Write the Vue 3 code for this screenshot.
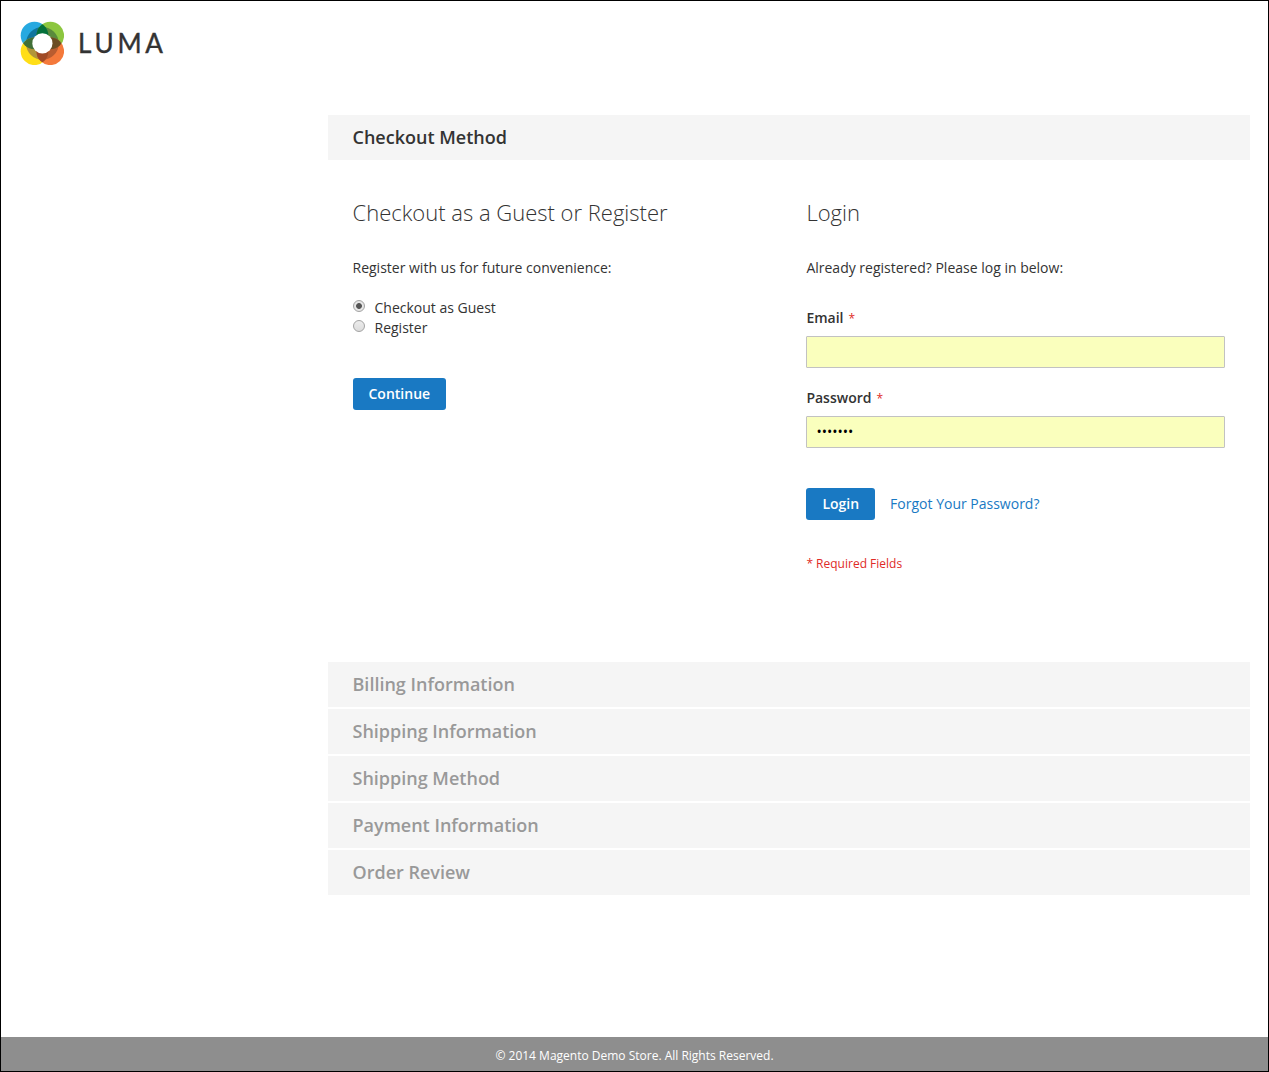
<script setup>
import { ref } from 'vue'

const method = ref('guest')
const email = ref('')
const password = ref('•••••••')
const steps = [
  'Billing Information',
  'Shipping Information',
  'Shipping Method',
  'Payment Information',
  'Order Review',
]
</script>

<template>
  <div class="page">
    <header class="header">
      <svg class="mark" width="44" height="44" viewBox="-22.4 -22.4 44 44" aria-hidden="true">
        <defs>
          <clipPath id="c-blue"><circle cx="-7.9" cy="-7.9" r="13.8" /></clipPath>
          <clipPath id="c-green"><circle cx="7.9" cy="-7.9" r="13.8" /></clipPath>
          <clipPath id="c-yellow"><circle cx="-7.9" cy="7.9" r="13.8" /></clipPath>
          <clipPath id="c-orange"><circle cx="7.9" cy="7.9" r="13.8" /></clipPath>
        </defs>
        <circle cx="-7.9" cy="-7.9" r="13.8" fill="#27a9e0" />
        <circle cx="7.9" cy="-7.9" r="13.8" fill="#8cc63f" />
        <circle cx="-7.9" cy="7.9" r="13.8" fill="#ffde17" />
        <circle cx="7.9" cy="7.9" r="13.8" fill="#f4793b" />
        <g clip-path="url(#c-blue)"><circle r="16.3" fill="#10759d" /></g>
        <g clip-path="url(#c-green)"><circle r="16.3" fill="#5a8a3c" /></g>
        <g clip-path="url(#c-yellow)"><circle r="16.3" fill="#b2953a" /></g>
        <g clip-path="url(#c-orange)"><circle r="16.3" fill="#b85c30" /></g>
        <g clip-path="url(#c-blue)"><circle cx="7.9" cy="-7.9" r="13.8" fill="#04703b" /></g>
        <g clip-path="url(#c-blue)"><circle cx="-7.9" cy="7.9" r="13.8" fill="#416f37" /></g>
        <g clip-path="url(#c-orange)"><circle cx="7.9" cy="-7.9" r="13.8" fill="#6b4c23" /></g>
        <g clip-path="url(#c-orange)"><circle cx="-7.9" cy="7.9" r="13.8" fill="#a04a25" /></g>
        <circle r="10.1" fill="#fff" />
      </svg>
      <span class="wordmark">LUMA</span>
    </header>

    <main class="checkout">
      <h1 class="bar active">Checkout Method</h1>
      <div class="columns">
        <section class="col">
          <h2>Checkout as a Guest or Register</h2>
          <p class="intro">Register with us for future convenience:</p>
          <div class="choices">
            <label><input v-model="method" type="radio" name="method" value="guest" /><span>Checkout as Guest</span></label>
            <label><input v-model="method" type="radio" name="method" value="register" /><span>Register</span></label>
          </div>
          <button class="btn">Continue</button>
        </section>
        <section class="col">
          <h2>Login</h2>
          <p class="intro">Already registered? Please log in below:</p>
          <div class="field">
            <label for="email">Email<i>*</i></label>
            <input id="email" v-model="email" type="text" />
          </div>
          <div class="field">
            <label for="pass">Password<i>*</i></label>
            <input id="pass" v-model="password" type="text" />
          </div>
          <div class="actions">
            <button class="btn">Login</button>
            <a href="#">Forgot Your Password?</a>
          </div>
          <p class="required">* Required Fields</p>
        </section>
      </div>
      <h1 v-for="s in steps" :key="s" class="bar">{{ s }}</h1>
    </main>

    <footer class="footer">© 2014 Magento Demo Store. All Rights Reserved.</footer>
  </div>
</template>

<style>
body { margin: 0; }
</style>

<style scoped>
.page {
  box-sizing: border-box;
  width: 1269px;
  height: 1072px;
  border: 1px solid #000;
  background: #fff;
  display: flex;
  flex-direction: column;
  font: 14px/20px "Open Sans", sans-serif;
  color: #333;
}
.header {
  display: flex;
  align-items: center;
  height: 44px;
  padding: 20px 0 0 19px;
}
.wordmark {
  margin-left: 14px;
  font: 26px/44px Lato, sans-serif;
  letter-spacing: 3.8px;
  color: #333;
  -webkit-text-stroke: 0.4px #333;
}
.checkout { width: 922px; margin: 50px 0 0 327px; }
.bar {
  box-sizing: border-box;
  height: 45px;
  margin: 0 0 2px;
  padding: 0 24.5px;
  background: #f5f5f5;
  font-size: 18px;
  font-weight: 600;
  line-height: 45px;
  color: #999;
}
.bar.active { color: #333; }
.columns {
  display: grid;
  grid-template-columns: 419px 419px;
  column-gap: 34.9px;
  height: 500px;
  padding-left: 24.5px;
}
.col { padding-top: 35px; }
h2 {
  margin: 0;
  font-size: 22px;
  font-weight: 300;
  line-height: 30px;
}
.intro { margin: 31px 0 0; }
.choices { margin: 20px 0 40px; }
.choices label { display: flex; }
.choices input {
  appearance: none;
  box-sizing: border-box;
  width: 12px;
  height: 12px;
  margin: 2px 10px 0 0;
  border: 1px solid #a3a3a3;
  border-radius: 50%;
  background: linear-gradient(#ececec, #dcdcdc);
}
.choices input:checked {
  background: radial-gradient(circle, #555 2.5px, #e6e6e6 3.3px);
}
.btn {
  height: 32px;
  padding: 0 16px;
  border: 0;
  border-radius: 3px;
  background: #1979c3;
  color: #fff;
  font: 600 14px/32px "Open Sans", sans-serif;
}
.field { margin-top: 20px; }
.intro + .field { margin-top: 30px; }
.field label { display: block; height: 28px; font-weight: 600; }
.field i {
  margin-left: 5px;
  font-size: 12px;
  font-style: normal;
  font-weight: 400;
  color: #e02b27;
}
.field input {
  box-sizing: border-box;
  display: block;
  width: 419px;
  height: 32px;
  padding: 0 9px 2px;
  border: 1px solid #c2c2c2;
  border-radius: 1px;
  background: #faffbd;
  font: 14px "Open Sans", sans-serif;
  color: #000;
  outline: 0;
}
.actions { display: flex; align-items: center; gap: 15px; margin-top: 40px; }
.actions a { color: #1979c3; text-decoration: none; }
.required { margin: 34px 0 0; font-size: 12px; color: #e02b27; }
.footer {
  height: 34px;
  margin-top: auto;
  background: #8e8e8e;
  color: #fff;
  font-size: 12px;
  line-height: 37px;
  text-align: center;
}
</style>
